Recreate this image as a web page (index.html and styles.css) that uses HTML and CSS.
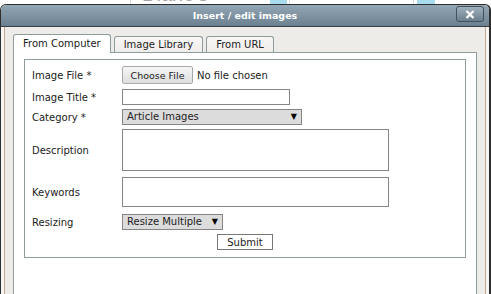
FILE: index.html
```html
<!DOCTYPE html>
<html lang="en">
<head>
	<meta charset="UTF-8">
	<meta name="viewport" content="width=device-width, initial-scale=1.0">
	<title>Insert / edit images</title>
	<link rel="stylesheet" href="styles.css">
</head>
<body>
	<div class="site-header">
		<div class="site-col first">
			<span class="site-title">Diane's Stories</span>
			<span class="site-block"></span>
		</div>
		<div class="site-col second">
			<span class="site-block"></span>
		</div>
	</div>

	<div class="dialog">
		<div class="dialog-title">
			<span>Insert / edit images</span>
			<button class="close-btn" title="Close">
				<svg width="10" height="9" viewBox="0 0 10 9"><path d="M1.5 1 L8.5 8 M8.5 1 L1.5 8" stroke="#fff" stroke-width="2.2" fill="none"/></svg>
			</button>
		</div>
		<div class="dialog-body">
			<div class="dialog-inner">
				<div class="tabs">
					<div class="tab active">From Computer</div>
					<div class="tab">Image Library</div>
					<div class="tab">From URL</div>
				</div>
				<div class="panel">
					<form class="upload-form" onsubmit="return false">
						<div class="row row-file">
							<label>Image File *</label>
							<div class="file-pick">
								<button type="button" class="choose-btn">Choose File</button>
								<span>No file chosen</span>
							</div>
						</div>
						<div class="row">
							<label>Image Title *</label>
							<input type="text" class="input-title">
						</div>
						<div class="row">
							<label>Category *</label>
							<span class="select-wrap category">
								<select><option>Article Images</option></select>
							</span>
						</div>
						<div class="row row-desc">
							<label>Description</label>
							<textarea class="input-desc"></textarea>
						</div>
						<div class="row row-keys">
							<label>Keywords</label>
							<textarea class="input-keys"></textarea>
						</div>
						<div class="row">
							<label>Resizing</label>
							<span class="select-wrap resizing">
								<select><option>Resize Multiple</option></select>
							</span>
						</div>
						<div class="submit-row">
							<button type="submit" class="submit-btn">Submit</button>
						</div>
					</form>
				</div>
			</div>
		</div>
	</div>
</body>
</html>
```
FILE: styles.css
```css
body {
	margin: 0;
	background-color: #fff;
	font-family: "DejaVu Sans", Verdana, sans-serif;
	font-size: 10px;
	color: #222;
	overflow: hidden;
	height: 294px;
}
.site-header {
	display: flex;
	height: 6px;
	overflow: hidden;
	padding-left: 130px;
}
.site-col {
	display: flex;
	justify-content: space-between;
	border-left: 1px solid #dcdcdc;
}
.site-col.first {
	width: 145px;
	padding-left: 11px;
	padding-right: 2px;
}
.site-col.second {
	width: 123px;
	border-right: 1px solid #dcdcdc;
	justify-content: flex-end;
	padding-right: 0;
}
.site-col.second .site-block {
	margin-right: -22px;
}
.site-title {
	font-family: "Liberation Sans", Arial, sans-serif;
	font-size: 20px;
	line-height: 20px;
	margin-top: -16px;
	color: #a3a3a3;
}
.site-block {
	width: 18px;
	height: 6px;
	background-color: #a9dbee;
}

/* dialog window */
.dialog {
	position: absolute;
	top: 4px;
	left: 0;
	width: 488px;
	height: 300px;
	border: 1px solid #2e2e2e;
	border-right-width: 2px;
	border-radius: 6px 6px 0 0;
	background-color: #f7f6f3;
	overflow: hidden;
}
.dialog-title {
	height: 21px;
	border-bottom: 1px solid #3a3f44;
	background: linear-gradient(#93a6b5, #6c8190);
	color: #fff;
	font-weight: bold;
	font-size: 9.5px;
	line-height: 21px;
	text-align: center;
	position: relative;
}
.close-btn {
	position: absolute;
	top: 1px;
	right: 5px;
	width: 28px;
	height: 16px;
	padding: 0;
	border: 1px solid #44525d;
	border-radius: 3px;
	background: linear-gradient(#9fb0bd, #6a7e8d);
	display: flex;
	align-items: center;
	justify-content: center;
}
.dialog-body {
	padding: 0 3px 0 3px;
	height: 100%;
}
.dialog-inner {
	height: 100%;
	border-left: 1px solid #c3a993;
	border-right: 1px solid #c3a993;
	background-color: #eeece9;
	padding: 8px 8px 0 8px;
}

/* tabs */
.tabs {
	display: flex;
	align-items: flex-end;
	gap: 3px;
	height: 17px;
}
.tab {
	height: 15px;
	line-height: 15px;
	padding: 0 9px;
	border: 1px solid #8d9c9d;
	border-bottom: none;
	border-radius: 3px 3px 0 0;
	background: linear-gradient(#f8f7f5, #eeedea);
	color: #222;
}
.tab.active {
	height: 18px;
	line-height: 18px;
	margin-bottom: -1px;
	background: #fff;
	position: relative;
	z-index: 1;
}
.panel {
	border: 1px solid #8d9c9d;
	background-color: #fff;
	padding: 6px 10px;
	height: 260px;
}

/* form */
.upload-form {
	border: 1px solid #8d9c9d;
	padding: 6px 0 7px 7px;
}
.row {
	display: flex;
	align-items: center;
	margin-bottom: 4px;
}
.row label {
	width: 90px;
}
.row-file {
	margin-bottom: 5px;
}
.row-desc {
	margin-bottom: 6px;
}
.row-keys {
	margin-bottom: 7px;
}
.file-pick {
	display: flex;
	align-items: center;
	gap: 4px;
	font-size: 10px;
}
.choose-btn {
	width: 71px;
	height: 18px;
	padding: 0;
	border: 1px solid #a9a9a9;
	border-radius: 2px;
	background: linear-gradient(#f6f6f6, #dedede);
	font-family: "DejaVu Sans", Verdana, sans-serif;
	font-size: 9.5px;
	color: #222;
}
input, textarea, select {
	font-family: "DejaVu Sans", Verdana, sans-serif;
	font-size: 10px;
	box-sizing: border-box;
	border: 1px solid #858585;
	margin: 0;
	border-radius: 0;
}
.input-title {
	width: 168px;
	height: 16px;
	padding: 0 3px;
}
.input-desc {
	width: 267px;
	height: 42px;
	resize: none;
}
.input-keys {
	width: 267px;
	height: 30px;
	resize: none;
}
.select-wrap {
	position: relative;
	display: block;
}
.select-wrap select {
	-webkit-appearance: none;
	appearance: none;
	height: 16px;
	padding: 0 0 0 4px;
	background-color: #dcdcdc;
	color: #222;
	line-height: 14px;
}
.select-wrap::after {
	content: "\25BC";
	position: absolute;
	top: 2px;
	right: 5px;
	font-size: 8px;
	line-height: 12px;
	color: #000;
	pointer-events: none;
}
.category select {
	width: 180px;
}
.resizing select {
	width: 101px;
}
.submit-row {
	text-align: center;
	padding-right: 7px;
}
.submit-btn {
	width: 56px;
	height: 16px;
	padding: 0;
	border: 1px solid #777;
	border-radius: 0;
	background: #fff;
	font-family: "DejaVu Sans", Verdana, sans-serif;
	font-size: 10px;
	color: #222;
}
```
